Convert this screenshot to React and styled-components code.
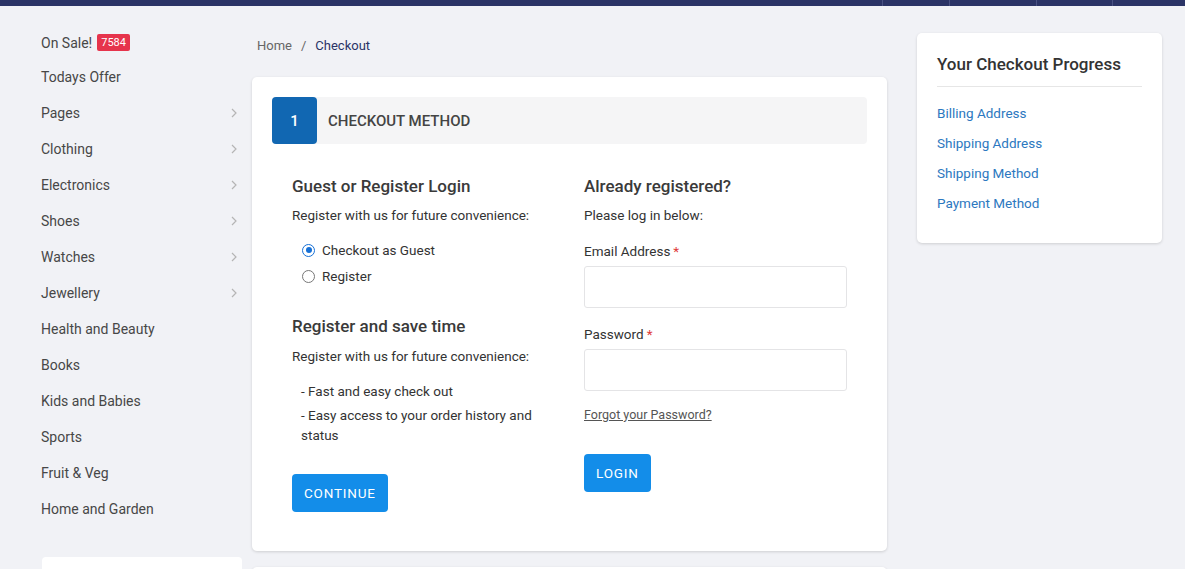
import React from 'react';
import styled, {createGlobalStyle} from 'styled-components';

const GlobalStyle = createGlobalStyle`
  * { box-sizing: border-box; }
  body {
    margin: 0;
    background: #f1f2f6;
    font-family: Roboto, "Liberation Sans", sans-serif;
    color: #444;
    overflow: hidden;
  }
`;

const TopBar = styled.div`
  height: 6px;
  background: #2b3466;
  display: flex;
  justify-content: flex-end;
  padding-right: 72px;
`;

const TopCell = styled.div`
  width: ${p => p.w}px;
  border-left: 1px solid #4a5283;
`;

const Page = styled.div`
  display: flex;
  align-items: flex-start;
  padding-left: 41px;
`;

const Sidebar = styled.div`
  width: 201px;
  padding-top: 20px;
  display: flex;
  flex-direction: column;
`;

const SideItem = styled.div`
  height: ${p => p.first ? 33 : 36}px;
  flex-shrink: 0;
  display: flex;
  align-items: center;
  justify-content: space-between;
  font-size: 14px;
  color: #474747;
  padding-right: 4px;
`;

const Badge = styled.span`
  background: #e6344c;
  color: #fff;
  font-size: 11px;
  padding: 2px 4px;
  border-radius: 2px;
  margin-left: 5px;
  position: relative;
  top: -2px;
`;

const SideCard = styled.div`
  margin-top: 30px;
  height: 40px;
  background: #fff;
  border-radius: 4px;
  margin-left: 1px;
`;

const Main = styled.div`
  width: 635px;
  margin-left: 10px;
`;

const Breadcrumb = styled.div`
  height: 71px;
  padding-top: 32px;
  padding-left: 5px;
  font-size: 13px;
  color: #666;
  span { margin: 0 9px; }
  b { font-weight: 400; color: #2b3466; }
`;

const Card = styled.div`
  background: #fff;
  border-radius: 5px;
  box-shadow: 0 1px 3px rgba(0,0,0,0.15);
  padding: 20px 20px 39px;
`;

const StepHead = styled.div`
  height: 47px;
  display: flex;
  align-items: center;
  background: #f5f5f6;
  border-radius: 4px;
`;

const StepNum = styled.div`
  width: 45px;
  height: 47px;
  background: #1167b2;
  color: #fff;
  border-radius: 4px;
  display: flex;
  align-items: center;
  justify-content: center;
  font-size: 15px;
  font-weight: 500;
`;

const StepTitle = styled.div`
  margin-left: 11px;
  font-size: 15px;
  font-weight: 500;
  color: #444;
`;

const Cols = styled.div`
  display: grid;
  grid-template-columns: 292px 263px;
  padding: 31px 20px 0;
`;

const Col = styled.div`
  display: flex;
  flex-direction: column;
  align-items: flex-start;
`;

const Heading = styled.div`
  font-size: 17px;
  font-weight: 500;
  color: #3a3a3a;
  line-height: 22px;
  margin-top: ${p => p.mt || 0}px;
`;

const Text = styled.div`
  font-size: 13.5px;
  line-height: 20px;
  color: #333;
  margin-top: ${p => p.mt || 0}px;
  padding-left: ${p => p.pl || 0}px;
`;

const RadioRow = styled.label`
  display: flex;
  align-items: center;
  font-size: 13.5px;
  color: #333;
  height: 26px;
  padding-left: 10px;
`;

const RadioDot = styled.span`
  width: 13px;
  height: 13px;
  border-radius: 50%;
  border: 1.5px solid ${p => p.on ? '#1670d6' : '#777'};
  margin-right: 7px;
  display: flex;
  align-items: center;
  justify-content: center;
  &::after {
    content: '';
    width: 6px;
    height: 6px;
    border-radius: 50%;
    background: ${p => p.on ? '#1670d6' : 'transparent'};
  }
`;

const Button = styled.button`
  margin-top: ${p => p.mt}px;
  height: 38px;
  padding: 0 12px;
  border: 0;
  border-radius: 4px;
  background: #138de9;
  color: #fff;
  font-family: inherit;
  font-size: 13.5px;
  letter-spacing: 0.8px;
`;

const Label = styled.div`
  font-size: 13.5px;
  color: #333;
  line-height: 20px;
  margin-top: ${p => p.mt}px;
  span { color: #e03a3a; margin-left: 3px; }
`;

const Input = styled.input`
  width: 263px;
  height: 42px;
  margin-top: 5px;
  border: 1px solid #e4e4e6;
  border-radius: 3px;
`;

const Forgot = styled.a`
  margin-top: 14px;
  font-size: 12.5px;
  color: #555;
  text-decoration: underline;
  line-height: 20px;
`;

const Aside = styled.div`
  width: 245px;
  margin-left: 30px;
  margin-top: 27px;
  background: #fff;
  border-radius: 5px;
  box-shadow: 0 1px 3px rgba(0,0,0,0.15);
  padding: 21px 20px 25px;
`;

const AsideTitle = styled.div`
  font-size: 17px;
  font-weight: 500;
  color: #333;
  padding-bottom: 12px;
  border-bottom: 1px solid #e6e6e6;
  margin-bottom: 11px;
`;

const AsideLink = styled.a`
  display: block;
  font-size: 13.5px;
  color: #2c78c0;
  line-height: 30px;
`;

const Chevron = () => (
  <svg width="8" height="10" viewBox="0 0 8 10" fill="none" stroke="#b5b5b5" strokeWidth="1.2">
    <path d="M2 1l4 4-4 4"/>
  </svg>
);

const menu = [
  ['Todays Offer', false], ['Pages', true], ['Clothing', true], ['Electronics', true],
  ['Shoes', true], ['Watches', true], ['Jewellery', true], ['Health and Beauty', false],
  ['Books', false], ['Kids and Babies', false], ['Sports', false], ['Fruit & Veg', false],
  ['Home and Garden', false],
];

export default function App() {
  return (
    <>
      <GlobalStyle/>
      <TopBar>
        <TopCell w={67}/>
        <TopCell w={87}/>
        <TopCell w={76}/>
        <TopCell w={1}/>
      </TopBar>
      <Page>
        <Sidebar>
          <SideItem first><span>On Sale!<Badge>7584</Badge></span></SideItem>
          {menu.map(([name, sub]) => (
            <SideItem key={name}>{name}{sub && <Chevron/>}</SideItem>
          ))}
          <SideCard/>
        </Sidebar>
        <Main>
          <Breadcrumb>Home<span>/</span><b>Checkout</b></Breadcrumb>
          <Card>
            <StepHead>
              <StepNum>1</StepNum>
              <StepTitle>CHECKOUT METHOD</StepTitle>
            </StepHead>
            <Cols>
              <Col>
                <Heading>Guest or Register Login</Heading>
                <Text mt={8}>Register with us for future convenience:</Text>
                <div style={{marginTop: 12}}>
                  <RadioRow><RadioDot on/>Checkout as Guest</RadioRow>
                  <RadioRow><RadioDot/>Register</RadioRow>
                </div>
                <Heading mt={26}>Register and save time</Heading>
                <Text mt={9}>Register with us for future convenience:</Text>
                <Text mt={15} pl={9}>- Fast and easy check out</Text>
                <Text mt={4} pl={9}>- Easy access to your order history and<br/>status</Text>
                <Button mt={29}>CONTINUE</Button>
              </Col>
              <Col>
                <Heading>Already registered?</Heading>
                <Text mt={8}>Please log in below:</Text>
                <Label mt={16}>Email Address<span>*</span></Label>
                <Input/>
                <Label mt={16}>Password<span>*</span></Label>
                <Input/>
                <Forgot>Forgot your Password?</Forgot>
                <Button mt={29}>LOGIN</Button>
              </Col>
            </Cols>
          </Card>
          <div style={{height: 16}}/>
          <Card/>
        </Main>
        <Aside>
          <AsideTitle>Your Checkout Progress</AsideTitle>
          <AsideLink>Billing Address</AsideLink>
          <AsideLink>Shipping Address</AsideLink>
          <AsideLink>Shipping Method</AsideLink>
          <AsideLink>Payment Method</AsideLink>
        </Aside>
      </Page>
    </>
  );
}
